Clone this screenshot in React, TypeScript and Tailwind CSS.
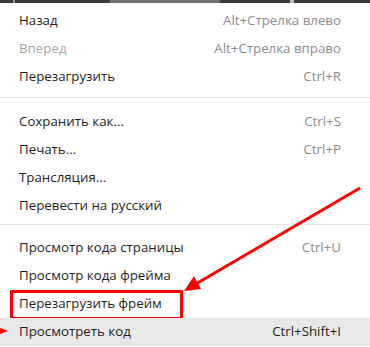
import React from "react";

type Item = { label: string; shortcut?: string; disabled?: boolean; active?: boolean; boxed?: boolean };

const groups: Item[][] = [
  [
    { label: "Назад", shortcut: "Alt+Стрелка влево" },
    { label: "Вперед", shortcut: "Alt+Стрелка вправо", disabled: true },
    { label: "Перезагрузить", shortcut: "Ctrl+R" },
  ],
  [
    { label: "Сохранить как...", shortcut: "Ctrl+S" },
    { label: "Печать...", shortcut: "Ctrl+P" },
    { label: "Трансляция..." },
    { label: "Перевести на русский" },
  ],
  [
    { label: "Просмотр кода страницы", shortcut: "Ctrl+U" },
    { label: "Просмотр кода фрейма" },
    { label: "Перезагрузить фрейм", boxed: true },
    { label: "Просмотреть код", shortcut: "Ctrl+Shift+I", active: true },
  ],
];

function Row({ item }: { item: Item }) {
  return (
    <div
      className={`relative flex h-[28px] items-center justify-between pl-[19px] pr-[29px] ${
        item.active ? "bg-[#e8e8e8]" : ""
      }`}
    >
      <span className={item.disabled ? "text-[#a6a6a6]" : "text-[#1f1f1f]"}>{item.label}</span>
      {item.shortcut && (
        <span className={item.active ? "text-[#1f1f1f]" : "text-[#8c8c8c]"}>{item.shortcut}</span>
      )}
      {item.boxed && (
        <div className="absolute left-[10px] top-0 h-[30px] w-[173px] border-[3px] border-[#ff0000]" />
      )}
    </div>
  );
}

export default function App() {
  return (
    <div
      className="relative h-[347px] w-[370px] overflow-hidden bg-white text-[13.3px]"
      style={{ fontFamily: '"Open Sans", "Noto Sans", sans-serif' }}
    >
      {/* cut-off window title strip */}
      <div className="flex h-[3px]">
        <div className="w-[13px] bg-[#3a3a3a]" />
        <div className="w-[2px] bg-[#9a9a9a]" />
        <div className="w-[95px] bg-[#3a3a3a]" />
        <div className="w-[110px] bg-[#6f6f6f]" />
        <div className="w-[70px] bg-[#3a3a3a]" />
        <div className="w-[4px] bg-[#bdbdbd]" />
        <div className="flex-1 bg-[#3a3a3a]" />
      </div>

      <div className="pt-[4px]">
        {groups[0].map((it) => (
          <Row key={it.label} item={it} />
        ))}
        <div className="pt-[6px] pb-[10px]">
          <div className="h-px bg-[#e6e6e6]" />
        </div>
        {groups[1].map((it) => (
          <Row key={it.label} item={it} />
        ))}
        <div className="pt-[4px] pb-[9px]">
          <div className="h-px bg-[#e6e6e6]" />
        </div>
        {groups[2].map((it) => (
          <Row key={it.label} item={it} />
        ))}
      </div>

      {/* annotation arrows */}
      <svg className="pointer-events-none absolute inset-0" width="370" height="347">
        <line x1="360" y1="188" x2="194" y2="285" stroke="#ff0000" strokeWidth="3" />
        <polygon points="184,291 201,289 194,276" fill="#ff0000" />
        <polygon points="8,331 0,328 0,334" fill="#ff0000" />
      </svg>
    </div>
  );
}
